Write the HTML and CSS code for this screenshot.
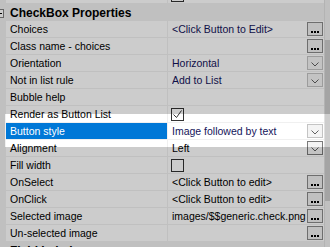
FILE: index.html
```html
<!DOCTYPE html>
<html lang="en">
<head>
  <meta charset="UTF-8">
  <title>CheckBox Properties</title>
  <link rel="stylesheet" href="styles.css">
</head>
<body>
  <div class="grid">
    <div class="props">
      <div class="row partial">
        <div class="gutter"></div>
        <div class="name"></div>
        <div class="value"><span class="check"></span></div>
      </div>

      <div class="cat">
        <svg class="toggle" width="9" height="9" viewBox="0 0 9 9"><rect x="0.5" y="0.5" width="8" height="8" fill="#fff" stroke="#808080"/><path d="M2 4.5h5" stroke="#000"/></svg>
        <span>CheckBox Properties</span>
      </div>

      <div class="row">
        <div class="gutter"></div>
        <div class="name">Choices</div>
        <div class="value"><span class="text blue">&lt;Click Button to Edit&gt;</span><span class="dots"><i></i><i></i><i></i></span></div>
      </div>
      <div class="row">
        <div class="gutter"></div>
        <div class="name">Class name - choices</div>
        <div class="value"><span class="text"></span><span class="dots"><i></i><i></i><i></i></span></div>
      </div>
      <div class="row">
        <div class="gutter"></div>
        <div class="name">Orientation</div>
        <div class="value"><span class="text blue">Horizontal</span><span class="drop"><svg width="8" height="5" viewBox="0 0 8 5"><path d="M0.5 0.5l3.5 3.5 3.5-3.5" fill="none" stroke="#606060"/></svg></span></div>
      </div>
      <div class="row">
        <div class="gutter"></div>
        <div class="name">Not in list rule</div>
        <div class="value"><span class="text blue">Add to List</span><span class="drop"><svg width="8" height="5" viewBox="0 0 8 5"><path d="M0.5 0.5l3.5 3.5 3.5-3.5" fill="none" stroke="#606060"/></svg></span></div>
      </div>
      <div class="row">
        <div class="gutter"></div>
        <div class="name">Bubble help</div>
        <div class="value"></div>
      </div>
      <div class="row">
        <div class="gutter"></div>
        <div class="name">Render as Button List</div>
        <div class="value"><span class="check"><svg width="11" height="11" viewBox="0 0 11 11"><path d="M1.5 5.5l3 3 5-7" fill="none" stroke="#333"/></svg></span></div>
      </div>
      <div class="row selected">
        <div class="gutter"></div>
        <div class="name">Button style</div>
        <div class="value"><span class="text blue">Image followed by text</span><span class="drop"><svg width="8" height="5" viewBox="0 0 8 5"><path d="M0.5 0.5l3.5 3.5 3.5-3.5" fill="none" stroke="#606060"/></svg></span></div>
      </div>
      <div class="row">
        <div class="gutter"></div>
        <div class="name">Alignment</div>
        <div class="value"><span class="text">Left</span><span class="drop hot"><svg width="8" height="5" viewBox="0 0 8 5"><path d="M0.5 0.5l3.5 3.5 3.5-3.5" fill="none" stroke="#606060"/></svg></span></div>
      </div>
      <div class="row">
        <div class="gutter"></div>
        <div class="name">Fill width</div>
        <div class="value"><span class="check"></span></div>
      </div>
      <div class="row">
        <div class="gutter"></div>
        <div class="name">OnSelect</div>
        <div class="value"><span class="text">&lt;Click Button to edit&gt;</span><span class="dots"><i></i><i></i><i></i></span></div>
      </div>
      <div class="row">
        <div class="gutter"></div>
        <div class="name">OnClick</div>
        <div class="value"><span class="text">&lt;Click Button to edit&gt;</span><span class="dots"><i></i><i></i><i></i></span></div>
      </div>
      <div class="row">
        <div class="gutter"></div>
        <div class="name">Selected image</div>
        <div class="value"><span class="text">images/$$generic.check.png</span><span class="dots"><i></i><i></i><i></i></span></div>
      </div>
      <div class="row">
        <div class="gutter"></div>
        <div class="name">Un-selected image</div>
        <div class="value"><span class="text"></span><span class="dots"><i></i><i></i><i></i></span></div>
      </div>

      <div class="cat">
        <svg class="toggle" width="9" height="9" viewBox="0 0 9 9"><rect x="0.5" y="0.5" width="8" height="8" fill="#fff" stroke="#808080"/><path d="M2 4.5h5" stroke="#000"/></svg>
        <span>Field Label</span>
      </div>
    </div>

    <div class="scrollbar"><div class="thumb"></div></div>

    <div class="spot"></div>
  </div>
</body>
</html>
```

FILE: styles.css
```css
body {
  margin: 0;
  font-family: "Liberation Sans", Arial, sans-serif;
  font-size: 10.5px;
  color: #000;
}

.grid {
  position: relative;
  display: flex;
  width: 330px;
  height: 247px;
  overflow: hidden;
  background: #fff;
}

.props {
  width: 324px;
  display: flex;
  flex-direction: column;
  flex-shrink: 0;
}

.row {
  display: flex;
  height: 17px;
  box-sizing: border-box;
  border-bottom: 1px solid #f0f0f0;
  background: #fff;
  line-height: 16px;
  flex-shrink: 0;
}

.row.partial {
  margin-top: -13px;
}

.gutter {
  width: 6px;
  background: #f0f0f0;
}

.name {
  width: 162px;
  box-sizing: border-box;
  padding-left: 4px;
  border-right: 1px solid #f0f0f0;
  white-space: nowrap;
  overflow: hidden;
}

.selected .name {
  background: #0078d7;
  color: #fff;
}

.value {
  flex: 1;
  display: flex;
  align-items: center;
  padding: 0 1px 0 4px;
  min-width: 0;
}

.text {
  flex: 1;
  white-space: nowrap;
  overflow: hidden;
}

.blue {
  color: #14145a;
}

.check {
  width: 13px;
  height: 13px;
  box-sizing: border-box;
  margin-left: -1px;
  border: 1px solid #333;
  background: #fff;
  display: flex;
  align-items: center;
  justify-content: center;
}

.dots {
  width: 16px;
  height: 14px;
  box-sizing: border-box;
  border: 1px solid #8a8a8a;
  background: #f0f0f0;
  display: flex;
  align-items: flex-end;
  justify-content: center;
  gap: 1px;
  padding-bottom: 2px;
  flex-shrink: 0;
}

.dots i {
  width: 2px;
  height: 2px;
  background: #000;
}

.drop {
  width: 16px;
  height: 14px;
  box-sizing: border-box;
  border: 1px solid #c4c4c4;
  background: #f4f4f4;
  display: flex;
  align-items: center;
  justify-content: center;
  padding-top: 2px;
  flex-shrink: 0;
}

.drop.hot {
  border-color: #7a7a7a;
}

.cat {
  display: flex;
  align-items: center;
  height: 17px;
  box-sizing: border-box;
  background: #f0f0f0;
  font-weight: bold;
  font-size: 12px;
  padding-left: 10px;
  flex-shrink: 0;
  position: relative;
}

.toggle {
  position: absolute;
  left: -5px;
  top: 5px;
}

.scrollbar {
  flex: 1;
  background: #f0f0f0;
  border-left: 1px solid #e0e0e0;
}

.thumb {
  margin-top: 40px;
  height: 161px;
  background: #cdcdcd;
}

.spot {
  position: absolute;
  left: 5px;
  top: 114px;
  width: 325px;
  height: 33px;
  box-shadow: 0 0 0 400px rgba(0, 0, 0, 0.2);
}
```
